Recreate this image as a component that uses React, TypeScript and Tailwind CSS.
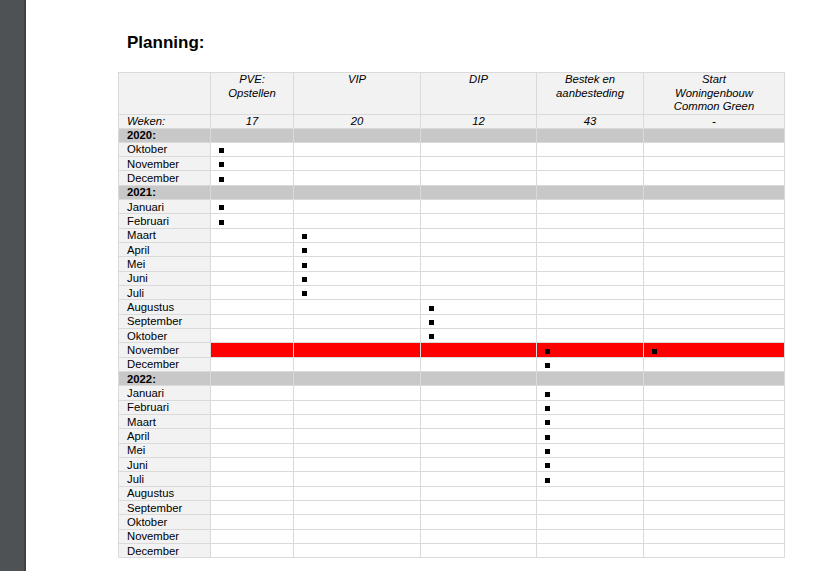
import React from 'react'

type Row =
  | { kind: 'year'; label: string }
  | { kind: 'month'; label: string; marks: number[]; red?: boolean }

const ROWS: Row[] = [
  { kind: 'year', label: '2020:' },
  { kind: 'month', label: 'Oktober', marks: [0] },
  { kind: 'month', label: 'November', marks: [0] },
  { kind: 'month', label: 'December', marks: [0] },
  { kind: 'year', label: '2021:' },
  { kind: 'month', label: 'Januari', marks: [0] },
  { kind: 'month', label: 'Februari', marks: [0] },
  { kind: 'month', label: 'Maart', marks: [1] },
  { kind: 'month', label: 'April', marks: [1] },
  { kind: 'month', label: 'Mei', marks: [1] },
  { kind: 'month', label: 'Juni', marks: [1] },
  { kind: 'month', label: 'Juli', marks: [1] },
  { kind: 'month', label: 'Augustus', marks: [2] },
  { kind: 'month', label: 'September', marks: [2] },
  { kind: 'month', label: 'Oktober', marks: [2] },
  { kind: 'month', label: 'November', marks: [3, 4], red: true },
  { kind: 'month', label: 'December', marks: [3] },
  { kind: 'year', label: '2022:' },
  { kind: 'month', label: 'Januari', marks: [3] },
  { kind: 'month', label: 'Februari', marks: [3] },
  { kind: 'month', label: 'Maart', marks: [3] },
  { kind: 'month', label: 'April', marks: [3] },
  { kind: 'month', label: 'Mei', marks: [3] },
  { kind: 'month', label: 'Juni', marks: [3] },
  { kind: 'month', label: 'Juli', marks: [3] },
  { kind: 'month', label: 'Augustus', marks: [] },
  { kind: 'month', label: 'September', marks: [] },
  { kind: 'month', label: 'Oktober', marks: [] },
  { kind: 'month', label: 'November', marks: [] },
  { kind: 'month', label: 'December', marks: [] },
]

const PHASES = [
  { title: ['PVE:', 'Opstellen'], weeks: '17' },
  { title: ['VIP'], weeks: '20' },
  { title: ['DIP'], weeks: '12' },
  { title: ['Bestek en', 'aanbesteding'], weeks: '43' },
  { title: ['Start', 'Woningenbouw', 'Common Green'], weeks: '-' },
]

const cell = 'border border-[#dadada] p-0'

export default function App() {
  return (
    <div className="flex h-[571px] w-full bg-white font-['Liberation_Sans',Arial,sans-serif] text-black">
      <div className="w-[26px] shrink-0 bg-[#4e5255] border-r-2 border-[#3f4244]" />
      <div className="pl-[92px]">
        <h1 className="mt-[33px] ml-[9px] text-[17px] font-bold leading-[20px]">Planning:</h1>
        <table className="mt-[19px] border-collapse table-fixed w-[666px] text-[11.3px] leading-[12px]">
          <colgroup>
            <col className="w-[92px]" />
            <col className="w-[83px]" />
            <col className="w-[127px]" />
            <col className="w-[116px]" />
            <col className="w-[107px]" />
            <col className="w-[141px]" />
          </colgroup>
          <tbody>
            <tr className="h-[39px] bg-[#f2f2f2]">
              <td className={cell} />
              {PHASES.map((p, i) => (
                <td key={i} className={`${cell} align-top text-center italic leading-[13.5px]`}>
                  {p.title.map((t, j) => (
                    <div key={j}>{t}</div>
                  ))}
                </td>
              ))}
            </tr>
            <tr className="h-[14px] bg-[#f2f2f2]">
              <td className={`${cell} italic pl-[8px]`}>Weken:</td>
              {PHASES.map((p, i) => (
                <td key={i} className={`${cell} text-center italic`}>{p.weeks}</td>
              ))}
            </tr>
            {ROWS.map((r, i) =>
              r.kind === 'year' ? (
                <tr key={i} className="h-[14.33px] bg-[#c8c8c8]">
                  <td className={`${cell} font-bold pl-[8px]`}>{r.label}</td>
                  {PHASES.map((_, j) => (
                    <td key={j} className={cell} />
                  ))}
                </tr>
              ) : (
                <tr key={i} className="h-[14.33px]">
                  <td className={`${cell} bg-[#f2f2f2] pl-[8px]`}>{r.label}</td>
                  {PHASES.map((_, j) => (
                    <td key={j} className={`${cell} pl-[8px] ${r.red ? 'bg-[#ff0000]' : 'bg-white'}`}>
                      {r.marks.includes(j) && (
                        <span className="block w-[5px] h-[5px] mt-[2px] bg-black" />
                      )}
                    </td>
                  ))}
                </tr>
              )
            )}
          </tbody>
        </table>
      </div>
    </div>
  )
}
